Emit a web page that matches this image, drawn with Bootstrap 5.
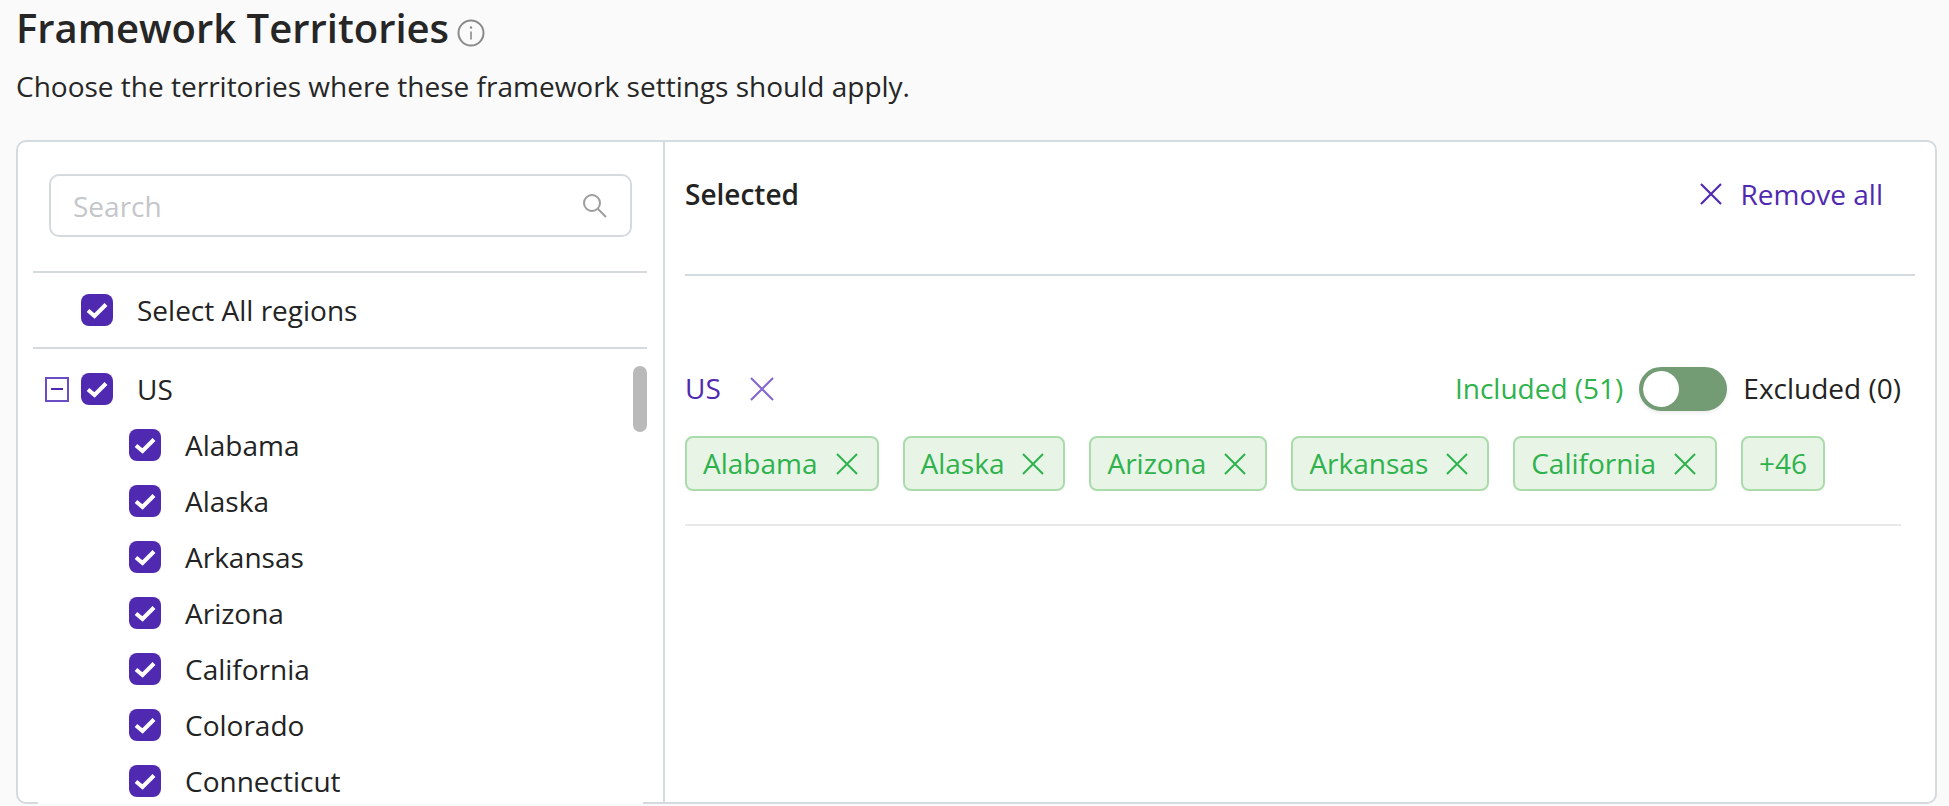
<!DOCTYPE html>
<html lang="en">
<head>
<meta charset="utf-8">
<title>Framework Territories</title>
<link href="https://cdn.jsdelivr.net/npm/bootstrap@5.3.0/dist/css/bootstrap.min.css" rel="stylesheet">
<style>
html,body{height:806px;overflow:hidden}
body{background:#fafafa;color:#232323;font-family:"Open Sans","Noto Sans",sans-serif;font-size:28px;line-height:40px}
.pg{padding:0 12px 0 16px}
.ttl{font-size:40px;font-weight:600;line-height:48px;margin:0;padding-top:4px;color:#262626}
.sub{margin:0;padding-top:14px;height:88px;color:#262626}
.info{width:28px;height:28px;margin:14px 0 0 8px;flex:none}
.panel{height:664px;border:2px solid #d5dade;border-radius:10px;background:#fff;position:relative}
.panel::after{content:"";position:absolute;left:20px;width:605px;bottom:-2px;height:2px;background:#fff}
.lpane{width:647px;flex:none;padding:0 16px 0 15px;border-right:2px solid #d5dade;position:relative;overflow:hidden}
.srch{margin:32px 15px 34px 16px;position:relative}
.srch .form-control{height:63px;border:2px solid #d5dade;border-radius:10px;padding:0 60px 0 22px;font-size:28px;color:#232323}
.srch .form-control::placeholder{color:#c4c6c9}
.srch svg{position:absolute;right:25px;top:19px;width:25px;height:25px}
.allrow{height:78px;border-top:2px solid #d5dade;border-bottom:2px solid #d5dade;padding-left:48px}
.terr{padding-top:12px}
.trow{height:56px}
.trow.kid{padding-left:96px}
.trow.par{padding-left:12px}
.form-check-input.cb{width:32px;height:32px;margin:0 24px 0 0;flex:none;float:none;border:0;border-radius:8px;background-color:#4f2ab1;background-size:32px 32px;background-image:url("data:image/svg+xml,%3csvg xmlns='http://www.w3.org/2000/svg' viewBox='0 0 32 32'%3e%3cpath fill='none' stroke='%23fff' stroke-width='4' d='M7 16.500l6.500 5.500L25 10.500'/%3e%3c/svg%3e")}
.minus{width:24px;height:25px;border:2px solid #6a4cc6;margin-right:12px;flex:none;background:#fff;display:flex;align-items:center;justify-content:center}
.minus::before{content:"";width:12px;height:2px;background:#4f2ab1}
.thumb{position:absolute;right:16px;top:224px;width:14px;height:66px;background:#b9b9b9;border-radius:7px}
.rpane{padding:0 20px;min-width:0}
.rhead{height:134px;padding:0 32px 28px 0;border-bottom:2px solid #d5dade}
.sel{font-weight:600}
.lnk{color:#4f2ab1;text-decoration:none;background:none;border:0;padding:0;font-size:28px;line-height:40px}
.lnk svg{width:22px;height:22px;margin-right:19px;flex:none}
.grp{margin:91px 14px 0 0;padding-bottom:33px;border-bottom:2px solid #e8e8e8}
.gname,.inc,.exc{margin-top:-2px}
.gname{color:#4f2ab1}
.gx{width:24px;height:24px;margin-left:29px}
.inc{color:#2fb24c}
.form-switch .form-check-input.tgl{width:88px;height:44px;margin:0 16px;float:none;border:4px solid #739c75;background-color:#739c75;border-radius:22px;background-position:left center;background-size:contain;background-image:url("data:image/svg+xml,%3csvg xmlns='http://www.w3.org/2000/svg' viewBox='-4 -4 8 8'%3e%3ccircle r='4' fill='%23fff'/%3e%3c/svg%3e");box-shadow:0 2px 4px rgba(0,0,0,.08)}
.chips{margin-top:25px;gap:24px}
.chp{height:55px;padding:0 19px 2px 16px;background:#e7f4e6;border:2px solid #a9dcaa;border-radius:8px;color:#2fb24c;gap:18px}
.chp:last-child{padding-right:16px}
.chp svg{width:22px;height:22px;flex:none;margin-top:2px}
</style>
</head>
<body>
<div class="pg">
  <div class="d-flex align-items-center">
    <h1 class="ttl">Framework Territories</h1>
    <svg class="info" viewBox="0 0 28 28" fill="none"><circle cx="14" cy="14" r="12.500" stroke="#8a8a8a" stroke-width="2"/><path d="M14 12.500v8" stroke="#8a8a8a" stroke-width="1.600"/><circle cx="14" cy="8.500" r="1.200" fill="#8a8a8a"/></svg>
  </div>
  <p class="sub">Choose the territories where these framework settings should apply.</p>

  <div class="panel d-flex">
    <div class="lpane">
      <div class="srch">
        <input class="form-control" type="text" placeholder="Search" aria-label="Search">
        <svg viewBox="0 0 25 25" fill="none" stroke="#9d9d9d" stroke-width="2"><circle cx="10" cy="10" r="8"/><path d="M15.500 15.500L24 24"/></svg>
      </div>
      <div class="allrow d-flex align-items-center">
        <input class="form-check-input cb" type="checkbox" checked aria-label="Select All regions"><span>Select All regions</span>
      </div>
      <div class="terr">
        <div class="trow par d-flex align-items-center"><span class="minus"></span><input class="form-check-input cb" type="checkbox" checked aria-label="US"><span>US</span></div>
        <div class="trow kid d-flex align-items-center"><input class="form-check-input cb" type="checkbox" checked aria-label="Alabama"><span>Alabama</span></div>
        <div class="trow kid d-flex align-items-center"><input class="form-check-input cb" type="checkbox" checked aria-label="Alaska"><span>Alaska</span></div>
        <div class="trow kid d-flex align-items-center"><input class="form-check-input cb" type="checkbox" checked aria-label="Arkansas"><span>Arkansas</span></div>
        <div class="trow kid d-flex align-items-center"><input class="form-check-input cb" type="checkbox" checked aria-label="Arizona"><span>Arizona</span></div>
        <div class="trow kid d-flex align-items-center"><input class="form-check-input cb" type="checkbox" checked aria-label="California"><span>California</span></div>
        <div class="trow kid d-flex align-items-center"><input class="form-check-input cb" type="checkbox" checked aria-label="Colorado"><span>Colorado</span></div>
        <div class="trow kid d-flex align-items-center"><input class="form-check-input cb" type="checkbox" checked aria-label="Connecticut"><span>Connecticut</span></div>
      </div>
      <div class="thumb"></div>
    </div>
    <div class="rpane flex-grow-1">
      <div class="rhead d-flex justify-content-between align-items-center">
        <span class="sel">Selected</span>
        <button class="lnk d-flex align-items-center" type="button"><svg viewBox="0 0 22 22" fill="none" stroke="#4f2ab1" stroke-width="2.200"><path d="M1 1l20 20M21 1L1 21"/></svg>Remove all</button>
      </div>
      <div class="grp">
        <div class="d-flex justify-content-between align-items-center">
          <div class="d-flex align-items-center"><span class="gname">US</span><svg class="gx" viewBox="0 0 24 24" fill="none" stroke="#8468cf" stroke-width="2.200"><path d="M1 1l22 22M23 1L1 23"/></svg></div>
          <div class="form-check form-switch d-flex align-items-center p-0 m-0">
            <span class="inc">Included (51)</span>
            <input class="form-check-input tgl" type="checkbox" role="switch" aria-label="Included or excluded">
            <span class="exc">Excluded (0)</span>
          </div>
        </div>
        <div class="chips d-flex">
          <div class="chp d-flex align-items-center">Alabama<svg viewBox="0 0 22 22" fill="none" stroke="#2fb24c" stroke-width="2"><path d="M1 1l20 20M21 1L1 21"/></svg></div>
          <div class="chp d-flex align-items-center">Alaska<svg viewBox="0 0 22 22" fill="none" stroke="#2fb24c" stroke-width="2"><path d="M1 1l20 20M21 1L1 21"/></svg></div>
          <div class="chp d-flex align-items-center">Arizona<svg viewBox="0 0 22 22" fill="none" stroke="#2fb24c" stroke-width="2"><path d="M1 1l20 20M21 1L1 21"/></svg></div>
          <div class="chp d-flex align-items-center">Arkansas<svg viewBox="0 0 22 22" fill="none" stroke="#2fb24c" stroke-width="2"><path d="M1 1l20 20M21 1L1 21"/></svg></div>
          <div class="chp d-flex align-items-center">California<svg viewBox="0 0 22 22" fill="none" stroke="#2fb24c" stroke-width="2"><path d="M1 1l20 20M21 1L1 21"/></svg></div>
          <div class="chp d-flex align-items-center">+46</div>
        </div>
      </div>
    </div>
  </div>
</div>
<script src="https://cdn.jsdelivr.net/npm/bootstrap@5.3.0/dist/js/bootstrap.bundle.min.js"></script>
</body>
</html>
